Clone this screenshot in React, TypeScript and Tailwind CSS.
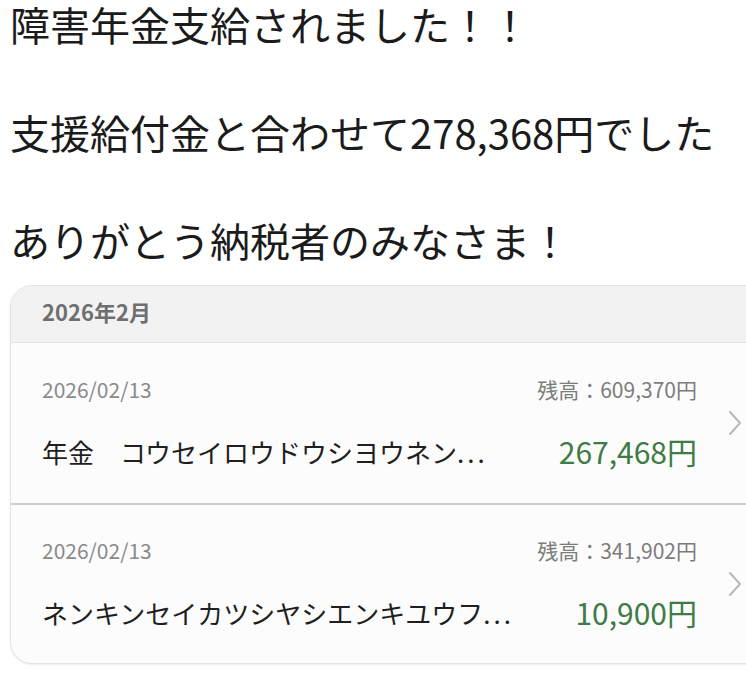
import { ReactNode } from "react";

type Entry = {
  date: string;
  balance: string;
  title: string;
  amount: string;
};

const entries: Entry[] = [
  {
    date: "2026/02/13",
    balance: "残高：609,370円",
    title: "年金　コウセイロウドウシヨウネン",
    amount: "267,468円"
  },
  {
    date: "2026/02/13",
    balance: "残高：341,902円",
    title: "ネンキンセイカツシヤシエンキユウフ",
    amount: "10,900円"
  }
];

function Chevron() {
  return (
    <svg width="16" height="28" viewBox="0 0 16 28" fill="none">
      <path d="M3 3 L13 14 L3 25" stroke="#b8b8b8" strokeWidth="2" strokeLinecap="round" strokeLinejoin="round" />
    </svg>
  );
}

function Row({ entry, divided }: { entry: Entry; divided?: boolean }) {
  return (
    <div className={`flex h-[160px] items-center pl-[31px] ${divided ? "border-t-2 border-[#cdcdcd]" : ""}`}>
      <div className="flex w-[655px] flex-col">
        <div className="flex h-[30px] items-center justify-between text-[21px] text-[#8a8a8a]">
          <span>{entry.date}</span>
          <span className="text-[#7c7c7c]">{entry.balance}</span>
        </div>
        <div className="mt-[26px] flex h-[40px] items-center justify-between">
          <span className="text-[26px] text-[#1f1f1f]">
            {entry.title}
            <span className="tracking-[3px]">...</span>
          </span>
          <span className="text-[30px] text-[#3e7b46]">{entry.amount}</span>
        </div>
      </div>
      <div className="ml-[30px] flex items-center">
        <Chevron />
      </div>
    </div>
  );
}

function Line({ children }: { children: ReactNode }) {
  return <p className="h-[48px] whitespace-nowrap">{children}</p>;
}

export default function App() {
  return (
    <div
      className="h-[679px] w-[746px] overflow-hidden bg-white"
      style={{ fontFamily: '"Noto Sans CJK JP", "Noto Sans", sans-serif' }}
    >
      <div className="flex flex-col gap-[60px] pl-[10px] text-[40px] leading-[48px] text-[#1b1b1b]">
        <Line>障害年金支給されました！！</Line>
        <Line>支援給付金と合わせて278,368円でした</Line>
        <Line>ありがとう納税者のみなさま！</Line>
      </div>

      <div className="ml-[10px] mt-[21px] w-[780px] overflow-hidden rounded-[22px] border border-[#e3e3e3] bg-[#fcfcfc] shadow-[0_1px_2px_rgba(0,0,0,0.08)]">
        <div className="flex h-[57px] items-center border-b border-[#e4e4e4] bg-[#f3f2f3] pb-[6px] pl-[31px] text-[22px] font-bold text-[#6f6f6f]">
          2026年2月
        </div>
        {entries.map((e, i) => (
          <Row key={i} entry={e} divided={i > 0} />
        ))}
      </div>
    </div>
  );
}
